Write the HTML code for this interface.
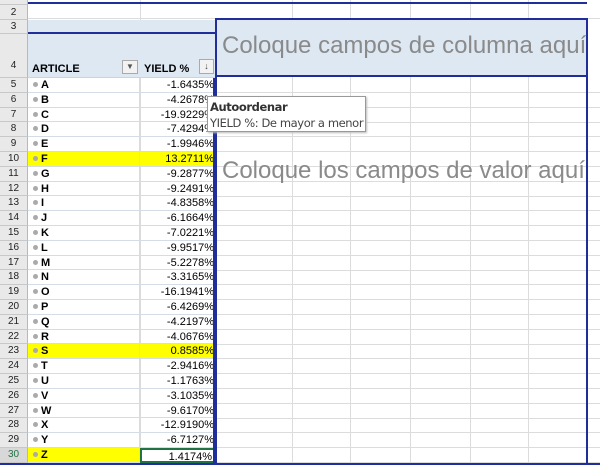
<!DOCTYPE html><html><head><meta charset="utf-8"><style>
body{margin:0;width:600px;height:465px;overflow:hidden;background:#fff;position:relative;font-family:"Liberation Sans",Arial,sans-serif}
div{position:absolute;box-sizing:border-box}
.rh{left:0;width:28px;background:#e9e9e9;border-bottom:1px solid #c8c8c8;border-right:1px solid #b8b8b8;font-size:10px;color:#222;text-align:center}
.a{left:28px;width:112px;border-bottom:1px solid #d4dce6;border-right:1px solid #d4dce6;font-size:11px;font-weight:bold;padding-left:5px}
.a:before{content:"";display:inline-block;width:5px;height:5px;border-radius:50%;background:#aaa;margin-right:3px;vertical-align:1px}
.b{left:140px;width:75px;border-bottom:1px solid #d4dce6;font-size:11px;text-align:right;padding-right:1px}
.y{background:#ffff00}
.g{border-left:1px solid #dcdcdc;top:0;height:465px}
.h{left:215px;width:385px;border-top:1px solid #dcdcdc;height:0}
</style></head><body>
<div class="g" style="left:140px"></div>
<div class="g" style="left:292px"></div><div class="g" style="left:350px"></div><div class="g" style="left:410px"></div><div class="g" style="left:470px"></div><div class="g" style="left:528px"></div>
<div style="left:28px;top:18px;width:572px;border-top:1px solid #dcdcdc"></div>
<div class="rh" style="top:0;height:5px"></div>
<div class="rh" style="top:5px;height:15px;line-height:15px">2</div>
<div class="rh" style="top:20px;height:14px;line-height:14px">3</div>
<div class="rh" style="top:34px;height:44px;line-height:64px">4</div>
<div style="left:28px;top:2px;width:559px;border-top:2px solid #1f2e9a"></div>
<div style="left:28px;top:20px;width:187px;height:14px;background:#dde8f3;border-bottom:2px solid #1f2e9a"></div>
<div style="left:28px;top:34px;width:187px;height:44px;background:#dde8f3;border-bottom:1px solid #c8d4e2"></div>
<div style="left:32px;top:63px;font-size:11px;font-weight:bold">ARTICLE</div>
<div style="left:122px;top:60px;width:16px;height:14px;border:1px solid #aaa;background:#f2f2f2;font-size:8px;text-align:center;line-height:12px;color:#555">▼</div>
<div style="left:144px;top:63px;font-size:11px;font-weight:bold">YIELD %</div>
<div style="left:199px;top:59px;width:15px;height:15px;border:1px solid #aaa;background:#f2f2f2;font-size:9px;text-align:center;line-height:13px;color:#444">↓</div>
<div id="rows"></div>
<div style="left:215px;top:18px;width:373px;height:59px;background:#dde8f3;border:2px solid #1f2e9a"></div>
<div style="left:222px;top:32px;font-size:24px;color:#8a8a8a;white-space:nowrap">Coloque campos de columna aquí</div>
<div style="left:215px;top:75px;width:373px;height:390px;border:2px solid #1f2e9a;border-top:none"></div>
<div style="left:222px;top:157px;font-size:24px;color:#8a8a8a;white-space:nowrap">Coloque los campos de valor aquí</div>
<div style="left:0;top:463px;width:600px;border-top:2px solid #1f2e9a"></div>
<div style="left:207px;top:96px;width:159px;height:36px;background:#fff;border:1px solid #999;box-shadow:1px 1px 2px #bbb;font-size:11.5px;color:#444;padding:2px 2px;line-height:16px;white-space:nowrap;font-family:'DejaVu Sans',sans-serif;letter-spacing:-0.4px"><b style="color:#333">Autoordenar</b><br>YIELD %: De mayor a menor</div>
<script>
var d=[["A","-1.6435%"],["B","-4.2678%"],["C","-19.9229%"],["D","-7.4294%"],["E","-1.9946%"],["F","13.2711%"],["G","-9.2877%"],["H","-9.2491%"],["I","-4.8358%"],["J","-6.1664%"],["K","-7.0221%"],["L","-9.9517%"],["M","-5.2278%"],["N","-3.3165%"],["O","-16.1941%"],["P","-6.4269%"],["Q","-4.2197%"],["R","-4.0676%"],["S","0.8585%"],["T","-2.9416%"],["U","-1.1763%"],["V","-3.1035%"],["W","-9.6170%"],["X","-12.9190%"],["Y","-6.7127%"],["Z","1.4174%"]];
var h="";for(var i=0;i<26;i++){var t=78+i*14.8,y=(i==5||i==18);var s="top:"+t+"px;height:14.8px;line-height:14px;";
h+='<div class="h" style="top:'+(t+14)+'px"></div>';
h+='<div class="rh" style="'+s+(i==25?'color:#217346;background:#d8d8d8':'')+'">'+(i+5)+'</div>';
h+='<div class="a'+(y||i==25?' y':'')+'" style="'+s+'">'+d[i][0]+'</div>';
h+='<div class="b'+(y?' y':'')+'" style="'+s+(i==25?'border:2px solid #217346;':'')+'">'+d[i][1]+'</div>';}
h+='<div style="left:28px;top:78px;width:187px;height:386px;border-right:2px solid #1f2e9a"></div>';
document.getElementById("rows").innerHTML=h;
</script>
</body></html>
